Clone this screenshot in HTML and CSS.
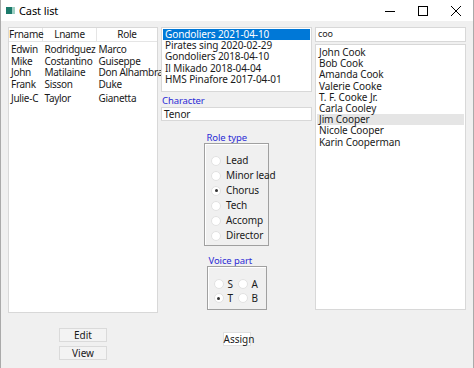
FILE: index.html
```html
<!DOCTYPE html>
<html lang="en">
   <head>
      <meta charset="UTF-8">
      <title>Cast list</title>
      <link rel="stylesheet" href="styles.css">
   </head>
   <body>
      <div class="window">
         <div class="titlebar">
            <span class="app-icon"><span></span></span>
            <span class="title">Cast list</span>
            <span class="controls">
               <svg width="10" height="10" viewBox="0 0 10 10"><path d="M0 5.5h10" stroke="#000" stroke-width="1"/></svg>
               <svg width="10" height="10" viewBox="0 0 10 10"><rect x="0.5" y="0.5" width="9" height="9" fill="none" stroke="#000" stroke-width="1"/></svg>
               <svg width="10" height="10" viewBox="0 0 10 10"><path d="M0 0L10 10M10 0L0 10" stroke="#000" stroke-width="1"/></svg>
            </span>
         </div>
         <div class="content">
            <!-- left: cast table -->
            <div class="col col-left">
               <div class="table-box">
                  <table class="cast">
                     <thead>
                        <tr><th class="c1">Frname</th><th class="c2">Lname</th><th class="c3">Role</th></tr>
                     </thead>
                     <tbody>
                        <tr><td>Edwin</td><td>Rodridguez</td><td>Marco</td></tr>
                        <tr><td>Mike</td><td>Costantino</td><td>Guiseppe</td></tr>
                        <tr><td>John</td><td>Matilaine</td><td>Don Alhambra</td></tr>
                        <tr><td>Frank</td><td>Sisson</td><td>Duke</td></tr>
                        <tr class="tall"><td>Julie-C</td><td>Taylor</td><td>Gianetta</td></tr>
                     </tbody>
                  </table>
               </div>
               <div class="btn-stack">
                  <button class="btn btn-wide">Edit</button>
                  <button class="btn btn-wide">View</button>
               </div>
            </div>

            <!-- middle: shows, character, role type, voice part -->
            <div class="col col-mid">
               <ul class="listbox shows">
                  <li class="selected">Gondoliers 2021-04-10</li>
                  <li>Pirates sing 2020-02-29</li>
                  <li>Gondoliers 2018-04-10</li>
                  <li>Il Mikado 2018-04-04</li>
                  <li>HMS Pinafore 2017-04-01</li>
               </ul>
               <div class="blue-label char-label">Character</div>
               <div class="field">Tenor</div>

               <div class="blue-label role-label">Role type</div>
               <div class="groupbox role-box">
                  <div class="radio-row"><span class="radio"></span>Lead</div>
                  <div class="radio-row"><span class="radio"></span>Minor lead</div>
                  <div class="radio-row"><span class="radio checked"></span>Chorus</div>
                  <div class="radio-row"><span class="radio"></span>Tech</div>
                  <div class="radio-row"><span class="radio"></span>Accomp</div>
                  <div class="radio-row"><span class="radio"></span>Director</div>
               </div>

               <div class="blue-label voice-label">Voice part</div>
               <div class="groupbox voice-box">
                  <div class="voice-grid">
                     <div class="radio-row"><span class="radio"></span>S</div>
                     <div class="radio-row"><span class="radio"></span>A</div>
                     <div class="radio-row"><span class="radio checked"></span>T</div>
                     <div class="radio-row"><span class="radio"></span>B</div>
                  </div>
               </div>

               <button class="btn btn-assign">Assign</button>
            </div>

            <!-- right: people search -->
            <div class="col col-right">
               <div class="field search">coo</div>
               <ul class="listbox people">
                  <li>John Cook</li>
                  <li>Bob Cook</li>
                  <li>Amanda Cook</li>
                  <li>Valerie Cooke</li>
                  <li>T. F. Cooke Jr.</li>
                  <li>Carla Cooley</li>
                  <li class="hover">Jim Cooper</li>
                  <li>Nicole Cooper</li>
                  <li>Karin Cooperman</li>
               </ul>
            </div>
         </div>
      </div>
   </body>
</html>
```

FILE: styles.css
```css
body {
margin: 0;
padding: 0;
font-family: "Noto Sans", "Open Sans", sans-serif;
font-size: 10px;
line-height: 11px;
letter-spacing: -0.1px;
color: #1a1a1a;
background-color: #fff;
}
.window {
width: 474px;
height: 368px;
box-sizing: border-box;
border-left: 1px solid #aaa;
border-right: 1px solid #aaa;
background-color: #f0f0f0;
overflow: hidden;
}
.titlebar {
height: 21px;
display: flex;
align-items: center;
background-color: #fff;
}
.app-icon {
width: 9px;
height: 7px;
margin-left: 5px;
margin-right: 4px;
background-color: #1c7a6b;
position: relative;
}
.app-icon span {
position: absolute;
right: 0;
top: 0;
width: 3px;
height: 7px;
background-color: #9fd0c4;
}
.title {
font-size: 11px;
color: #000;
}
.controls {
margin-left: auto;
display: flex;
align-items: center;
gap: 23px;
margin-right: 12px;
}
.controls svg {
display: block;
}
.content {
display: flex;
gap: 3px;
padding-left: 7px;
}
.col {
display: flex;
flex-direction: column;
}
.col-left {
width: 150px;
align-items: center;
}
.col-mid {
width: 151px;
align-items: center;
}
.col-right {
width: 151px;
}
.table-box {
width: 150px;
height: 286px;
margin-top: 6px;
box-sizing: border-box;
border: 1px solid #d8d8d8;
background-color: #fff;
}
.cast {
border-collapse: collapse;
table-layout: fixed;
width: 148px;
font-size: inherit;
letter-spacing: -0.3px;
}
.cast th {
font-weight: normal;
height: 13px;
padding: 0;
border-right: 1px solid #e5e5e5;
border-bottom: 1px solid #e5e5e5;
text-align: center;
}
.cast th.c1 { width: 33px; }
.cast th.c2 { width: 53px; }
.cast th.c3 { border-right: none; }
.cast td {
padding: 0 0 0 2px;
height: 11.5px;
white-space: nowrap;
overflow: visible;
}
.cast tbody tr:first-child td {
padding-top: 2px;
}
.cast tr.tall td {
height: 14px;
padding-top: 1px;
}
.btn-stack {
display: flex;
flex-direction: column;
gap: 4px;
margin-top: 15px;
}
.btn {
font-family: inherit;
font-size: 10px;
padding: 0;
background-color: #f3f3f3;
border: 1px solid #dadada;
color: #1a1a1a;
}
.btn-wide {
width: 48px;
height: 14px;
line-height: 12px;
}
.listbox {
list-style: none;
margin: 0;
padding: 1px;
background-color: #fff;
border: 1px solid #d8d8d8;
box-sizing: border-box;
}
.listbox li {
height: 11.2px;
line-height: 11px;
padding-left: 2px;
white-space: nowrap;
}
.shows {
width: 151px;
height: 65px;
margin-top: 6px;
}
.shows li.selected {
background-color: #0078d7;
color: #fff;
}
.blue-label {
color: #2b2bd6;
font-size: 9.5px;
}
.char-label {
align-self: flex-start;
margin-top: 3px;
height: 12px;
line-height: 12px;
padding-left: 1px;
}
.field {
width: 151px;
height: 14px;
line-height: 12px;
box-sizing: border-box;
background-color: #fff;
border: 1px solid #d8d8d8;
padding-left: 2px;
}
.role-label {
margin-top: 12px;
width: 64px;
height: 10px;
line-height: 10px;
padding-left: 4px;
}
.groupbox {
box-sizing: border-box;
border: 1px solid #a0a0a0;
box-shadow: inset 1px 1px 0 #fff;
}
.role-box {
width: 65px;
height: 103px;
padding: 9px 0 0 6px;
}
.radio-row {
display: flex;
align-items: center;
height: 15px;
white-space: nowrap;
}
.radio {
width: 10px;
height: 10px;
box-sizing: border-box;
border-radius: 50%;
background-color: #fff;
border: 1px solid #e2e2e2;
margin-right: 5px;
position: relative;
flex: none;
}
.radio.checked::after {
content: "";
position: absolute;
left: 2.5px;
top: 2.5px;
width: 3px;
height: 3px;
border-radius: 50%;
background-color: #333;
}
.voice-label {
margin-top: 10px;
width: 60px;
height: 10px;
line-height: 10px;
padding-left: 4px;
}
.voice-box {
width: 60px;
height: 44px;
padding: 10px 0 0 6px;
}
.voice-grid {
display: grid;
grid-template-columns: 24px 24px;
}
.voice-grid .radio-row {
height: 14px;
}
.voice-grid .radio {
margin-right: 4px;
}
.btn-assign {
margin-top: 22px;
width: 28px;
height: 14px;
line-height: 12px;
background-color: #fff;
border-color: #e0e0e0;
}
.search {
margin-top: 6px;
height: 15px;
font-size: 9px;
}
.people {
margin-top: 2px;
height: 266px;
padding-top: 2px;
}
.people li.hover {
background-color: #e5e5e5;
}
```
